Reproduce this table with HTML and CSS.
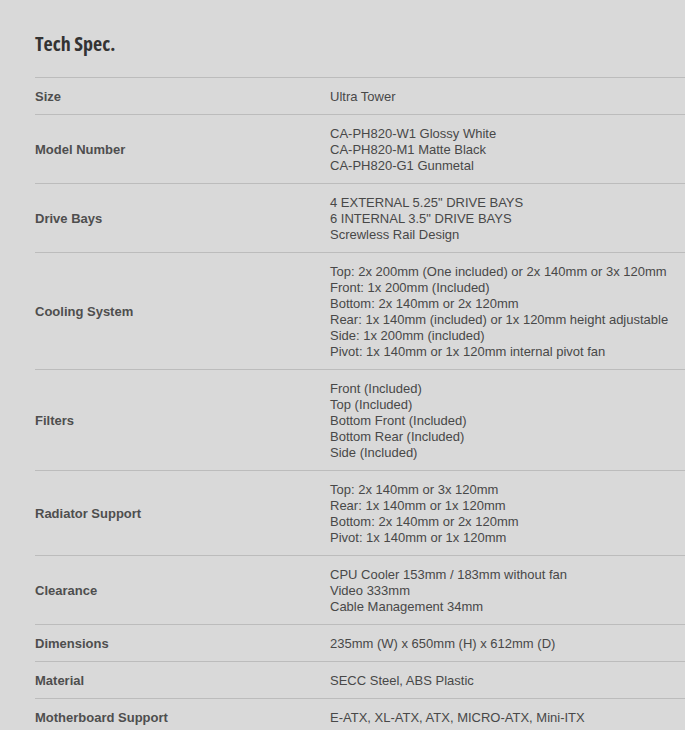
FILE: index.html
```html
<!DOCTYPE html>
<html>
<head>
<meta charset="utf-8">
<link rel="stylesheet" href="styles.css">
</head>
<body>
<div class="page">
  <h2 class="title">Tech Spec.</h2>
  <div class="spec">
    <div class="row"><div class="label">Size</div><div class="value">Ultra Tower</div></div>
    <div class="row"><div class="label">Model Number</div><div class="value">CA-PH820-W1 Glossy White<br>CA-PH820-M1 Matte Black<br>CA-PH820-G1 Gunmetal</div></div>
    <div class="row"><div class="label">Drive Bays</div><div class="value">4 EXTERNAL 5.25" DRIVE BAYS<br>6 INTERNAL 3.5" DRIVE BAYS<br>Screwless Rail Design</div></div>
    <div class="row"><div class="label">Cooling System</div><div class="value">Top: 2x 200mm (One included) or 2x 140mm or 3x 120mm<br>Front: 1x 200mm (Included)<br>Bottom: 2x 140mm or 2x 120mm<br>Rear: 1x 140mm (included) or 1x 120mm height adjustable<br>Side: 1x 200mm (included)<br>Pivot: 1x 140mm or 1x 120mm internal pivot fan</div></div>
    <div class="row"><div class="label">Filters</div><div class="value">Front (Included)<br>Top (Included)<br>Bottom Front (Included)<br>Bottom Rear (Included)<br>Side (Included)</div></div>
    <div class="row"><div class="label">Radiator Support</div><div class="value">Top: 2x 140mm or 3x 120mm<br>Rear: 1x 140mm or 1x 120mm<br>Bottom: 2x 140mm or 2x 120mm<br>Pivot: 1x 140mm or 1x 120mm</div></div>
    <div class="row"><div class="label">Clearance</div><div class="value">CPU Cooler 153mm / 183mm without fan<br>Video 333mm<br>Cable Management 34mm</div></div>
    <div class="row"><div class="label">Dimensions</div><div class="value">235mm (W) x 650mm (H) x 612mm (D)</div></div>
    <div class="row"><div class="label">Material</div><div class="value">SECC Steel, ABS Plastic</div></div>
    <div class="row"><div class="label">Motherboard Support</div><div class="value">E-ATX, XL-ATX, ATX, MICRO-ATX, Mini-ITX</div></div>
  </div>
</div>
</body>
</html>
```
FILE: styles.css
```css
html, body {
  margin: 0;
  padding: 0;
  background: #d9d9d9;
}
body {
  font-family: "Liberation Sans", Arial, sans-serif;
  font-size: 13px;
  color: #454545;
}
.page {
  padding: 33px 0 0 35px;
}
.title {
  margin: 0 0 22px 0;
  font-family: "Open Sans", sans-serif;
  font-weight: 700;
  font-stretch: 75%;
  font-size: 20px;
  line-height: 22px;
  color: #333;
}
.spec {
  border-top: 1px solid #bcbcbc;
}
.row {
  display: flex;
  align-items: center;
  border-bottom: 1px solid #bcbcbc;
  padding: 10px 0 10px 0;
  line-height: 16px;
}
.row .label, .row .value {
  padding-top: 1px;
  margin-bottom: -1px;
}
.label {
  width: 295px;
  flex: none;
  font-weight: 700;
  color: #4e4e4e;
}
.value {
  color: #484848;
}
```
